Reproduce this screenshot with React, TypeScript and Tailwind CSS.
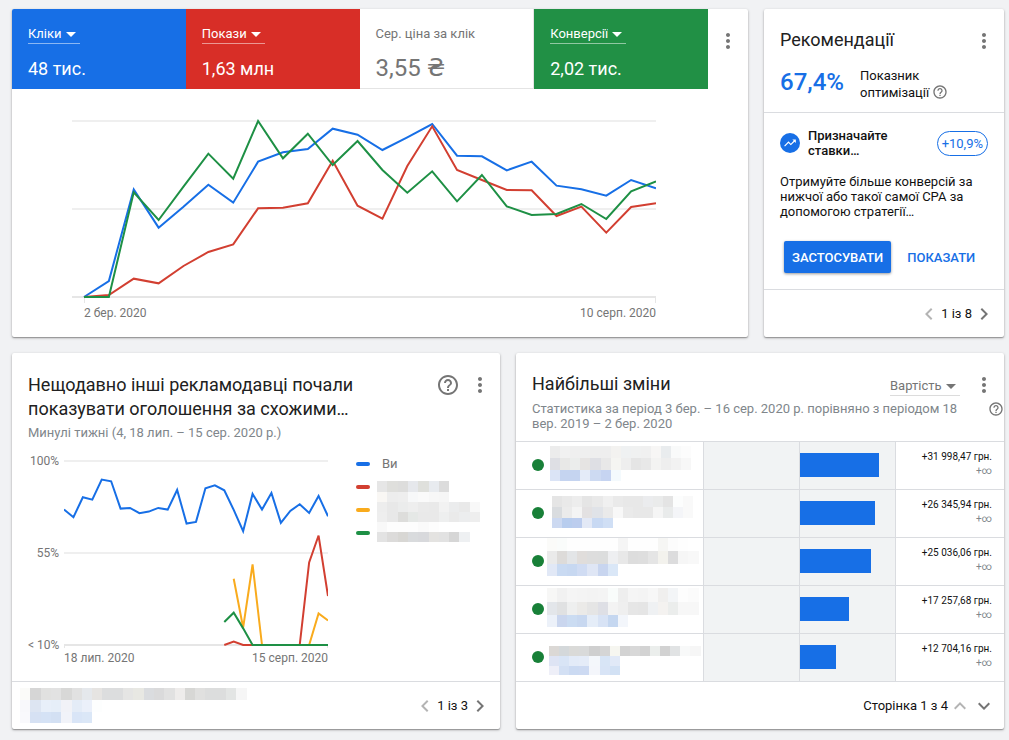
import React from 'react';
import {
  MdMoreVert,
  MdHelpOutline,
  MdChevronLeft,
  MdChevronRight,
  MdExpandLess,
  MdExpandMore,
  MdTrendingUp,
} from 'react-icons/md';

const BLUE = '#176fe6';
const RED = '#d23f31';
const GREEN = '#1e9045';
const YELLOW = '#f9ab1d';

interface Series {
  color: string;
  start?: number;
  values: number[];
}

const performance: Series[] = [
  {
    color: BLUE,
    values: [0, 48, 323, 208, 271, 337, 283, 406, 434, 444, 505, 487, 441, 479, 519, 424, 422, 380, 406, 334, 323, 304, 351, 326],
  },
  {
    color: RED,
    values: [0, 6, 55, 41, 93, 135, 158, 266, 268, 281, 409, 274, 235, 393, 512, 381, 351, 321, 320, 243, 271, 193, 270, 281],
  },
  {
    color: GREEN,
    values: [0, 0, 314, 231, 331, 430, 355, 528, 416, 490, 396, 468, 381, 313, 377, 287, 366, 272, 246, 249, 279, 234, 317, 347],
  },
];

const auction: Series[] = [
  {
    color: BLUE,
    values: [
      407, 384, 444, 437, 497, 492, 410, 412, 396, 401, 412, 407, 466, 365, 370, 471, 480, 465, 406, 342, 454, 407, 457,
      367, 403, 423, 397, 448, 387,
    ],
  },
  { color: YELLOW, start: 18, values: [199, 52, 242, 0, 0, 0, 0, 0, 0, 95, 74] },
  { color: RED, start: 17, values: [0, 10, 0, 0, 0, 0, 0, 0, 0, 248, 329, 147] },
  { color: GREEN, start: 17, values: [69, 97, 50, 0, 0, 0, 0, 0, 0, 0, 0, 0] },
];

interface MosaicRow {
  x?: number;
  y: number;
  h: number;
  colors: string;
}

const changes: { amount: string; bar: number; name: MosaicRow[] }[] = [
  {
    amount: '+31 998,47 грн.',
    bar: 83,
    name: [
      { x: 3, y: 4, h: 12, colors: 'ececec f1f1f1 efefef efefef eeeeee eeeeee f3f2f0 eff1f2 f0f1f1 f0f0f0 f7f6f5 e9ecee f9fafa fcfcfc' },
      { x: 3, y: 16, h: 12, colors: 'dedfe4 e8e8e7 ebedec e6e4e3 dedfe4 e8e8e8 f5f5f2 eeeeee e5e5e5 e8e8e8 f3f3f2 eeeeee f2f2f2 f7f7f7' },
      { x: 3, y: 28, h: 11, colors: 'dbe4f6 c5d4f0 c5d4f0 e4ebf8 cddaf2 c6d4f1 f4fafd' },
    ],
  },
  {
    amount: '+26 345,94 грн.',
    bar: 79,
    name: [
      { x: 5, y: 6, h: 11, colors: 'e5e5e5 e9e9e9 ededed e5e5e5 e9e9e9 f0f0f0 eaeaea e8e8e8 e8e8e8 ebecee eaebeb e4e4e4 fcfdfd f9f9f9' },
      { x: 5, y: 17, h: 11, colors: 'd9dcdf ebebeb f4f4f4 e3e1e2 e0e3e8 eaeaea f8f8f8 eaeaea e8e8e8 e8e8e8 f5f5f5 e9ebeb f4f5f8 f9f9f9' },
      { x: 5, y: 28, h: 10, colors: 'ccd9f1 b8cdee bccdee e3e9f6 c8d9f3 d0dff5' },
    ],
  },
  {
    amount: '+25 036,06 грн.',
    bar: 75,
    name: [
      { y: 0, h: 13, colors: 'fbfbf9 fafcfb fefefe fefefe fefefe fefefe fefefe f5f5f5 fefefe fefefe fefefe f6f6f4 fcfcfc fefefe' },
      { y: 13, h: 13, colors: 'eaeaea dddbd9 e3e5e7 e0dddb dddddd dcdddd eeeff1 e8e8e8 dddddd dedede e5e5e5 f3f2ed dcdcdd f6f6f6 f8f8f8' },
      { y: 26, h: 12, colors: 'e1e8f6 c9daf2 c7d8f1 d0dcf3 dfe6f5 c8d5ef dae7f7' },
    ],
  },
  {
    amount: '+17 257,68 грн.',
    bar: 52,
    name: [
      { y: 2, h: 14, colors: 'f7f7f6 f1f1f1 f5f5f5 f4f4f4 f3f3f3 f4f4f4 f9fcfb eeeeee f5f5f5 f4f4f4 f7f7f7 f0efee f3f5f7 fdfdfd fbfbfb' },
      { y: 16, h: 13, colors: 'e3e6ea e0e1e2 eeefef ebeae8 e5e5e5 dedfe5 f3f3f3 efefef e6e6e6 e5e5e5 eff1f3 f4f2f0 ebedec f7f7f7 f7f7f7' },
      { y: 29, h: 12, colors: 'ecf1f9 cad6ee cbdcf2 c8d8f0 e5edf8 d8e3f5 c5d7f0 f3f6fb' },
    ],
  },
  {
    amount: '+12 704,16 грн.',
    bar: 38,
    name: [
      { x: 2, y: 12, h: 10, colors: 'dbd8d5 d4d8da dadad8 d9dada cfcfcf d5d5d5 f6f6f0 d3d3d3 d8d8d8 d3d3d3 ebeeec d2d2d2 e1e3e4 f8f9f9 f6f6f6' },
      { x: 2, y: 22, h: 10, colors: 'dee4f4 d9e5f6 e3ebf8 e5ecf8 f4f7fb d8e5f6 e1e9f7' },
      { x: 2, y: 32, h: 9, colors: 'eeeff8 d3e0f4 cbdaf2 cddaf2 f4f6fb d8e4f6 d2e1f4' },
    ],
  },
];

const competitorNames: MosaicRow[] = [
  { y: 0, h: 11, colors: 'e6e6e6 dfdfdc dddddc e6e8ec dfe0dc e8ebef dcdcdc' },
  { y: 11, h: 10, colors: 'f9f7f4 ededed eeeeee f7f8f9 fafafa f7f7f7 f6f6f6' },
  { y: 21, h: 10, colors: 'ededed e8e8e8 ebecec eeeeee eaeaea e9e9e9 f2f2f2 ebeced e9e9e9 f8f8f8' },
  { y: 31, h: 10, colors: 'eeeeee e8e8e8 dddddb e5e8e6 e9e9e9 e9e9e9 eeefef eaeaea ecedee eeeeee' },
  { y: 41, h: 10, colors: 'f8f8f8 fdfdfd fdfdfd fdfdfd fafafa fdfdfd' },
  { y: 51, h: 10, colors: 'e3e3e3 dcdbda d8d7d4 d9dbdd d8d9dc e4e3e1 e2e2e2 d6d6d6 eef0f2' },
];

const campaignName: MosaicRow[] = [
  {
    y: 0,
    h: 12,
    colors:
      'fbfbf9 d6d6d6 e1e1e0 e2e2e2 d8d8d7 e1e1e1 e5e8ec e6e4e2 dcddde dcddde e5e5e4 e8e8e3 dadcdf dadadb e1e1e1 eeeceb d7d7d5 e0e0df dcdddd dcdddd e3e5e4 f6f6f6',
  },
  { y: 12, h: 12, colors: 'f8f8fb dde5f2 e8eff9 e6eef8 f1f2f7 e4ecf7 ebf0fa fdfefe' },
  { y: 24, h: 11, colors: 'f9f9fc d6e1f3 d5e2f5 d3e0f3 f1f3f9 d9e5f7 dbe7f7' },
];

interface MosaicProps {
  rows: MosaicRow[];
  width: number;
  height: number;
  cell: number;
}

// Pixelated stand-in for private names
const Mosaic: React.FC<MosaicProps> = ({ rows, width, height, cell }) => (
  <svg width={width} height={height} shapeRendering="crispEdges" aria-hidden="true" className="shrink-0">
    {rows.map((row) =>
      row.colors.split(' ').map((color, i) => (
        <rect key={`${row.y}-${i}`} x={(row.x ?? 0) + i * cell} y={row.y} width={cell} height={row.h} fill={`#${color}`} />
      ))
    )}
  </svg>
);

interface LineChartProps {
  label: string;
  series: Series[];
  max: number;
  count: number;
  width: number;
  height: number;
  left?: number;
  top: number;
  bottom: number;
  tick: number;
}

const LineChart: React.FC<LineChartProps> = ({ label, series, max, count, width, height, left = 0, top, bottom, tick }) => {
  const step = (width - left) / (count - 1);
  const scale = (bottom - top) / max;
  const middle = (top + bottom) / 2;

  return (
    <svg viewBox={`0 0 ${width} ${height}`} className="block w-full h-auto" role="img" aria-label={label}>
      <path d={`M0 ${top}H${width}M0 ${middle}H${width}`} stroke="#efefef" strokeWidth="2" />
      <path d={`M0 ${bottom}H${width}`} stroke="#e6e6e6" strokeWidth="2" />
      <path d={`M${left + 0.5} ${bottom}v${tick}M${width - 0.5} ${bottom}v${tick}`} stroke="#e6e6e6" />
      {series.map((s) => (
        <polyline
          key={s.color}
          fill="none"
          stroke={s.color}
          strokeWidth="2"
          points={s.values.map((v, i) => `${left + (i + (s.start ?? 0)) * step},${bottom - v * scale}`).join(' ')}
        />
      ))}
    </svg>
  );
};

const Card: React.FC<{ children: React.ReactNode; className?: string }> = ({ children, className = '' }) => (
  <section
    className={`flex flex-col bg-white rounded-xs overflow-hidden shadow-[0_1px_3px_0_rgba(0,0,0,0.28),0_1px_1px_0_rgba(0,0,0,0.24)] ${className}`}
  >
    {children}
  </section>
);

const MoreButton: React.FC = () => (
  <button aria-label="Інші параметри" className="shrink-0 text-[#757575]">
    <MdMoreVert className="w-6 h-6" />
  </button>
);

const Dropdown: React.FC<{ label: string; value: string; className: string }> = ({ label, value, className }) => (
  <div className={`relative flex w-fit border-b ${className}`}>
    <select aria-label={label} className="appearance-none bg-transparent pr-[18px] text-[13px] leading-[18px] outline-none">
      <option>{value}</option>
    </select>
    <svg viewBox="0 0 10 5" className="absolute right-1 top-[7px] w-[10px] h-[5px] pointer-events-none" aria-hidden="true">
      <path d="M0 0h10L5 5z" fill="currentColor" />
    </svg>
  </div>
);

const Pager: React.FC<{ text: string }> = ({ text }) => (
  <nav className="flex items-center pr-2 text-[13px]" aria-label="Сторінки">
    <button aria-label="Назад" className="text-[#b4b4b4]">
      <MdChevronLeft className="w-6 h-6" />
    </button>
    <span>{text}</span>
    <button aria-label="Далі" className="text-[#757575]">
      <MdChevronRight className="w-6 h-6" />
    </button>
  </nav>
);

const MetricsCard: React.FC = () => (
  <Card className="flex-1">
    <div className="flex">
      <div className="flex-1 h-20 px-4 pt-4 bg-[#176fe6] text-white">
        <Dropdown label="Показник 1" value="Кліки" className="border-white/50" />
        <p className="mt-[13px] text-lg leading-6">48 тис.</p>
      </div>
      <div className="flex-1 h-20 px-4 pt-4 bg-[#d82e27] text-white">
        <Dropdown label="Показник 2" value="Покази" className="border-white/50" />
        <p className="mt-[13px] text-lg leading-6">1,63 млн</p>
      </div>
      <div className="flex-1 h-20 px-4 pt-4 border-b border-r border-[#e4e4e4] text-[#757575]">
        <p className="text-[13px] leading-[18px]">Сер. ціна за клік</p>
        <p className="mt-[13px] text-2xl leading-6">
          3,55 <span className="font-['DejaVu_Sans',sans-serif]">₴</span>
        </p>
      </div>
      <div className="flex-1 h-20 px-4 pt-4 bg-[#219045] text-white">
        <Dropdown label="Показник 4" value="Конверсії" className="border-white/50" />
        <p className="mt-[13px] text-lg leading-6">2,02 тис.</p>
      </div>
      <div className="flex justify-center items-start w-10 pt-5">
        <MoreButton />
      </div>
    </div>

    <div className="pt-[30px] pb-4 pl-[60px] pr-[92px] text-xs text-[#757575]">
      <LineChart
        label="Кліки, покази та конверсії"
        series={performance}
        max={528}
        count={24}
        width={584}
        height={184}
        left={12}
        top={2}
        bottom={178}
        tick={6}
      />
      <div className="flex justify-between pl-3 pt-0.5">
        <span>2 бер. 2020</span>
        <span>10 серп. 2020</span>
      </div>
    </div>
  </Card>
);

const RecommendationsCard: React.FC = () => (
  <Card className="w-60 shrink-0">
    <div className="pt-5 pb-[11px] border-b border-[#dadce0]">
      <header className="flex items-start justify-between pl-4 pr-2">
        <h2 className="text-lg leading-[22px] text-[#212121]">Рекомендації</h2>
        <MoreButton />
      </header>
      <div className="flex items-start gap-4 px-4 mt-3.5">
        <span className="text-2xl leading-[30px] font-medium text-[#176fe6]">67,4%</span>
        <p className="text-[13px] leading-[17px]">
          Показник
          <br />
          оптимізації <MdHelpOutline className="inline w-4 h-4 align-text-bottom text-[#757575]" />
        </p>
      </div>
    </div>

    <div className="px-4 pt-[15px] pb-4 text-[13px] leading-[15px] border-b border-[#dadce0]">
      <div className="flex items-center">
        <span className="flex items-center justify-center w-5 h-5 mr-2 rounded-full bg-[#176fe6] text-white shrink-0">
          <MdTrendingUp className="w-3.5 h-3.5" />
        </span>
        <h3 className="flex-1 font-medium">
          Призначайте
          <br />
          ставки…
        </h3>
        <span className="px-1 py-1 border border-[#176fe6] rounded-full text-[#176fe6]">+10,9%</span>
      </div>
      <p className="mt-4">Отримуйте більше конверсій за нижчої або такої самої CPA за допомогою стратегії…</p>
      <div className="flex mt-[22px] ml-1 font-medium">
        <button className="h-8 px-2 rounded-xs bg-[#176fe6] text-white shadow-[0_1px_3px_0_rgba(0,0,0,0.4)]">
          ЗАСТОСУВАТИ
        </button>
        <button className="h-8 px-4 text-[#176fe6]">ПОКАЗАТИ</button>
      </div>
    </div>

    <footer className="flex flex-1 items-center justify-end">
      <Pager text="1 із 8" />
    </footer>
  </Card>
);

const AuctionCard: React.FC = () => (
  <Card>
    <header className="flex items-start pt-5 pl-4 pr-2">
      <div className="flex-1">
        <h2 className="max-w-[360px] text-lg leading-6 text-[#212121]">
          Нещодавно інші рекламодавці почали показувати оголошення за схожими…
        </h2>
        <p className="mt-1 text-[13px] leading-4 text-[#80868b]">Минулі тижні (4, 18 лип. – 15 сер. 2020 р.)</p>
      </div>
      <button aria-label="Довідка" className="mr-2 text-[#757575]">
        <MdHelpOutline className="w-6 h-6" />
      </button>
      <MoreButton />
    </header>

    <div className="flex flex-1 items-start px-4 pt-3.5 pb-[17px] text-xs leading-3 text-[#757575]">
      <div className="flex flex-1">
        <div className="flex flex-col justify-between w-9 pr-[5px] pb-[13px] text-right whitespace-nowrap">
          <span>100%</span>
          <span>55%</span>
          <span>&lt; 10%</span>
        </div>
        <div className="flex-1">
          <LineChart
            label="Відсоток отриманих показів"
            series={auction}
            max={553}
            count={29}
            width={264}
            height={196}
            top={6}
            bottom={190}
            tick={3}
          />
          <div className="flex justify-between pt-px">
            <span>18 лип. 2020</span>
            <span>15 серп. 2020</span>
          </div>
        </div>
      </div>
      <div className="flex w-[156px] pl-7 gap-[7px]">
        <div className="flex flex-col gap-[19px] pt-[7px]">
          <span className="w-3.5 h-1 rounded-full bg-[#176fe6]" />
          <span className="w-3.5 h-1 rounded-full bg-[#d23f31]" />
          <span className="w-3.5 h-1 rounded-full bg-[#f9ab1d]" />
          <span className="w-3.5 h-1 rounded-full bg-[#1e9045]" />
        </div>
        <div className="flex flex-col gap-2">
          <span className="pl-[5px] text-[13px] leading-[18px]">Ви</span>
          <Mosaic rows={competitorNames} width={104} height={61} cell={10.3} />
        </div>
      </div>
    </div>

    <footer className="flex shrink-0 items-center justify-between h-12 pl-2 border-t border-[#dadce0]">
      <Mosaic rows={campaignName} width={240} height={35} cell={10.3} />
      <Pager text="1 із 3" />
    </footer>
  </Card>
);

const ChangesCard: React.FC = () => (
  <Card>
    <header className="pt-5 pb-2.5">
      <div className="flex items-start h-[22px] pl-4 pr-2">
        <h2 className="flex-1 text-lg leading-[22px] text-[#212121]">Найбільші зміни</h2>
        <div className="pt-1 mr-3 text-[#757575]">
          <Dropdown label="Показник змін" value="Вартість" className="border-[#dcdcdc]" />
        </div>
        <MoreButton />
      </div>
      <div className="flex items-start pl-4 pt-1.5">
        <p className="flex-1 pr-6 text-[13px] leading-[15px] text-[#80868b]">
          Статистика за період 3 бер. – 16 сер. 2020 р. порівняно з періодом 18 вер. 2019 – 2 бер. 2020
        </p>
        <button aria-label="Довідка" className="text-[#757575]">
          <MdHelpOutline className="w-4 h-4" />
        </button>
      </div>
    </header>

    <table className="w-full table-fixed border-separate border-spacing-0 border-t border-[#dadce0]">
      <tbody>
        {changes.map((row) => (
          <tr key={row.amount} className="h-12">
            <td className="p-0 border-b border-[#dadce0]">
              <div className="flex items-center h-[47px] pl-4 pb-px overflow-hidden">
                <span className="w-3 h-3 mr-[3px] rounded-full bg-[#188038] shrink-0" />
                <Mosaic rows={row.name} width={156} height={46} cell={10.1} />
              </div>
            </td>
            <td className="w-24 p-0 border-b border-l border-[#dadce0] bg-[#f1f3f4]" />
            <td className="w-24 px-0 pt-0 pb-px border-b border-l border-[#dadce0] bg-[#f1f3f4]">
              <div className="h-6 bg-[#176fe6]" style={{ width: `${row.bar}%` }} />
            </td>
            <td className="w-[109px] py-0 pl-0 pr-3 border-b border-l border-[#dadce0] text-right text-[10px] leading-[14px]">
              <div className="pb-[3px]">
                <p>{row.amount}</p>
                <p className="text-[#80868b]">+∞</p>
              </div>
            </td>
          </tr>
        ))}
      </tbody>
    </table>

    <footer className="flex shrink-0 items-center justify-end h-[47px] pr-2 text-[13px]">
      <span>Сторінка 1 з 4</span>
      <button aria-label="Попередня сторінка" className="text-[#b4b4b4]">
        <MdExpandLess className="w-6 h-6" />
      </button>
      <button aria-label="Наступна сторінка" className="text-[#757575]">
        <MdExpandMore className="w-6 h-6" />
      </button>
    </footer>
  </Card>
);

const App: React.FC = () => {
  return (
    <main className="flex flex-col gap-4 min-h-screen pt-[9px] pb-[11px] pl-3 pr-[5px] bg-[#f1f2f4] font-['Roboto',sans-serif] text-[#111111]">
      <div className="flex gap-4">
        <MetricsCard />
        <RecommendationsCard />
      </div>
      <div className="grid grid-cols-2 gap-4">
        <AuctionCard />
        <ChangesCard />
      </div>
    </main>
  );
};

export default App;
